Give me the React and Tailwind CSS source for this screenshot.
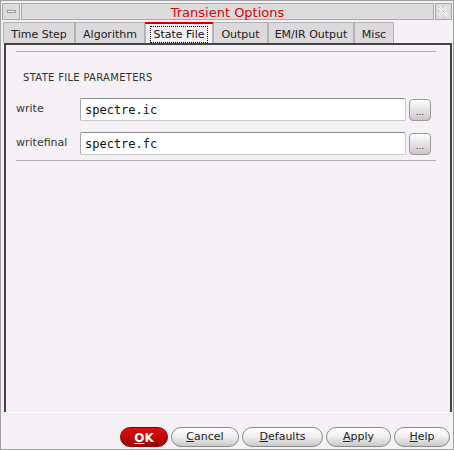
import React from "react";

const font = { fontFamily: '"DejaVu Sans", Verdana, sans-serif' };

function Tab({ label, selected, w }) {
  if (selected) {
    return (
      <div className={`${w} h-[21px] relative bg-[#f5f1f6] border-x border-[#b8b4b8] flex items-center justify-center`}>
        <div className="absolute left-[-1px] right-[-1px] top-0 h-[2px] bg-[#d00000]" />
        <span className="border border-dotted border-black px-[2px] leading-[15px] mt-[3px] text-[11px] text-[#111]">{label}</span>
      </div>
    );
  }
  return (
    <div className={`${w} h-[21px] bg-[#dcd9dc] border border-b-0 border-[#b4b1b4] flex items-center justify-center text-[11px] text-[#222] pt-[4px]`}>
      {label}
    </div>
  );
}

function Btn({ children, w }) {
  return (
    <div className={`${w} h-[20px] rounded-full border border-[#8a8a8a] bg-gradient-to-b from-[#ffffff] via-[#eeeeee] to-[#c9c9c9] flex items-center justify-center text-[11px] text-[#222] pt-[1px]`}>
      {children}
    </div>
  );
}

function Field({ label, value }) {
  return (
    <div className="flex items-center h-[23px]">
      <div className="w-[64px] text-[11px] text-[#333]">{label}</div>
      <div className="w-[326px] h-[23px] bg-white border border-[#c8c8c8] border-t-[#8c8c8c] border-l-[#a8a8a8] rounded-[2px] flex items-center pl-[4px] text-[12px] text-[#111]" style={{ fontFamily: '"DejaVu Sans Mono", monospace' }}>
        {value}
      </div>
      <div className="ml-[3px] w-[22px] h-[22px] rounded-[4px] border border-[#9a9a9a] bg-gradient-to-b from-[#ffffff] to-[#c8c6ca] flex items-end justify-center pb-[3px] text-[9px] leading-[9px] text-[#333]">
        ...
      </div>
    </div>
  );
}

export default function App() {
  return (
    <div className="w-[454px] h-[450px] bg-[#f5f1f6] border border-[#a0a0a0] flex flex-col" style={font}>
      {/* title bar */}
      <div className="flex gap-[1px] pl-[1px] pt-[2px] pr-[1px] h-[19px]">
        <div className="w-[18px] h-[17px] bg-[#dcdcdc] border border-[#a8a8a8] flex items-center justify-center">
          <div className="w-[9px] h-[3px] border border-[#9a9a9a] bg-[#f0f0f0]" />
        </div>
        <div className="flex-1 h-[17px] bg-[#dcdcdc] border border-[#a8a8a8] flex items-center justify-center text-[13px] text-[#e00000] leading-none pt-[1px]">
          Transient Options
        </div>
        <div className="w-[17px] h-[17px] bg-[#dcdcdc] border border-[#a8a8a8] flex items-center justify-center">
          <svg width="11" height="11" viewBox="0 0 11 11">
            <path d="M1 1 L10 10 M10 1 L1 10" stroke="#f4f4f4" strokeWidth="3" />
            <path d="M1 1 L10 10 M10 1 L1 10" stroke="#b8b8b8" strokeWidth="1" strokeDasharray="1 1" />
          </svg>
        </div>
      </div>
      {/* tabs */}
      <div className="flex pl-[2px] mt-[2px]">
        <Tab label="Time Step" w="w-[72px]" />
        <Tab label="Algorithm" w="w-[70px]" />
        <Tab label="State File" w="w-[68px]" selected />
        <Tab label="Output" w="w-[55px]" />
        <Tab label="EM/IR Output" w="w-[86px]" />
        <Tab label="Misc" w="w-[40px]" />
      </div>
      {/* panel */}
      <div className="ml-[3px] mr-[1px] h-[369px] border-2 border-b-0 border-[#444444] flex flex-col">
        <div className="mt-[6px] ml-[10px] mr-[14px] h-px bg-[#b0aeb0]" />
        <div className="ml-[17px] mt-[18px] text-[10px] text-[#333] tracking-[0.3px]">STATE FILE PARAMETERS</div>
        <div className="ml-[10px] mt-[13px] flex flex-col gap-[11px]">
          <Field label="write" value="spectre.ic" />
          <Field label="writefinal" value="spectre.fc" />
        </div>
        <div className="mt-[5px] ml-[10px] mr-[14px] h-px bg-[#b0aeb0]" />
      </div>
      <div className="h-px ml-[4px] mr-[1px] bg-white" />
      {/* buttons */}
      <div className="flex justify-end gap-[3px] pr-[3px] mt-[14px]">
        <div className="w-[48px] h-[20px] rounded-full border border-[#8a0000] bg-gradient-to-b from-[#e01010] to-[#a00000] flex items-center justify-center text-[12px] font-bold text-white pt-[1px]">
          <span><u>O</u>K</span>
        </div>
        <Btn w="w-[68px]"><span><u>C</u>ancel</span></Btn>
        <Btn w="w-[81px]"><span><u>D</u>efaults</span></Btn>
        <Btn w="w-[65px]"><span><u>A</u>pply</span></Btn>
        <Btn w="w-[56px]"><span><u>H</u>elp</span></Btn>
      </div>
    </div>
  );
}
